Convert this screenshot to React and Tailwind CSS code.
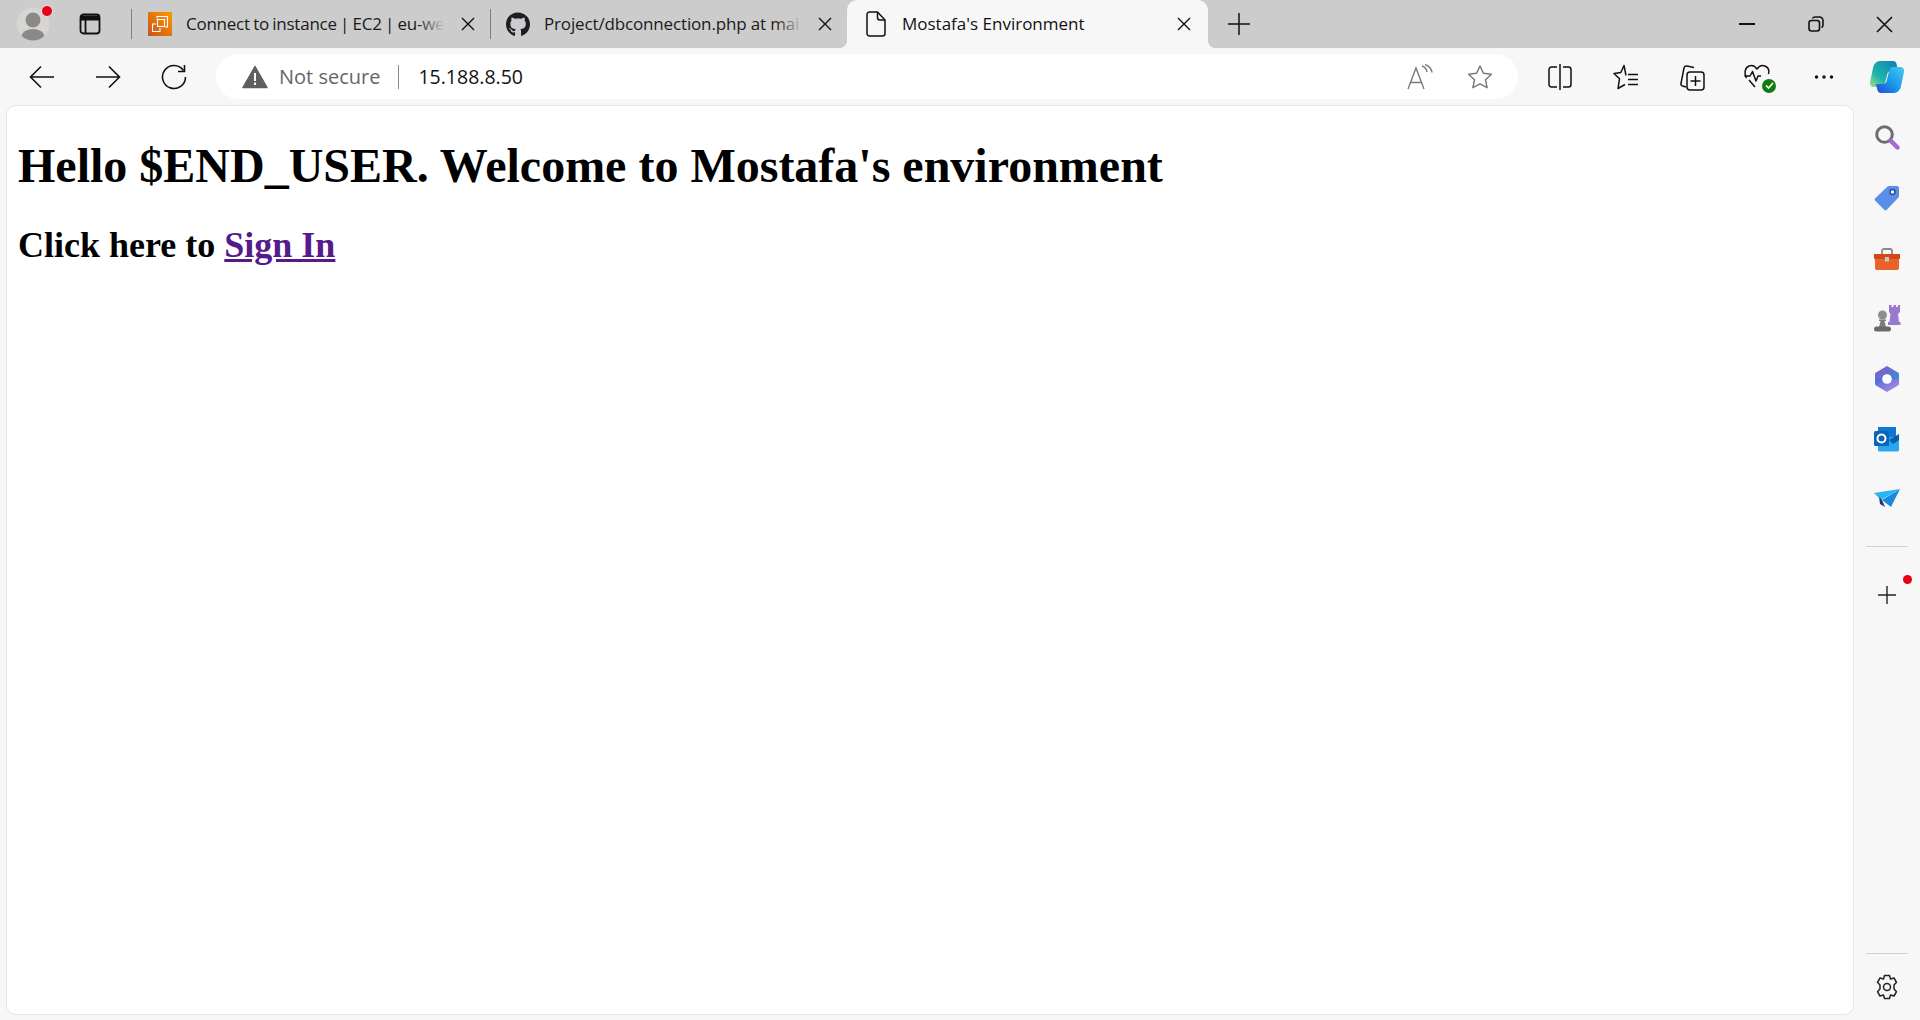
import React from 'react';
import { FaGithub } from 'react-icons/fa';

const CloseIcon = ({ size = 14 }) => (
  <svg width={size} height={size} viewBox="0 0 14 14" fill="none" stroke="#111" strokeWidth="1.4">
    <path d="M1 1l12 12M13 1L1 13" />
  </svg>
);

const Avatar = () => (
  <div className="relative w-[40px] h-[40px] flex items-center justify-center">
    <svg width="34" height="34" viewBox="0 0 34 34">
      <defs>
        <clipPath id="avatarClip"><circle cx="17" cy="17" r="16.5" /></clipPath>
      </defs>
      <circle cx="17" cy="17" r="16.5" fill="#d8d6d2" />
      <g clipPath="url(#avatarClip)" fill="#8b8987">
        <circle cx="17" cy="13" r="7.5" />
        <ellipse cx="17" cy="30" rx="11.5" ry="8" />
      </g>
    </svg>
    <span className="absolute top-[1px] right-[0px] w-[12px] h-[12px] rounded-full bg-[#e60012] border border-[#e6e6e6]" />
  </div>
);

const TabActionsIcon = () => (
  <svg width="22" height="22" viewBox="0 0 22 22" fill="none" stroke="#111" strokeWidth="1.8">
    <rect x="1.5" y="1.5" width="19" height="19" rx="3" />
    <path d="M1.5 5h19" strokeWidth="5" />
    <path d="M6.5 6v14" />
  </svg>
);

const Ec2Favicon = () => (
  <svg width="24" height="24" viewBox="0 0 24 24">
    <defs>
      <linearGradient id="ec2Grad" x1="0" y1="1" x2="1" y2="0">
        <stop offset="0" stopColor="#c8511b" />
        <stop offset="1" stopColor="#ff9900" />
      </linearGradient>
    </defs>
    <rect width="24" height="24" fill="url(#ec2Grad)" />
    <g fill="none" stroke="#fff" strokeWidth="1.1">
      <path d="M9 6.5V4.5h10.5V15H17" />
      <rect x="9.5" y="7.5" width="7" height="7" />
      <path d="M8 12H4.5v7.5H12V16" />
    </g>
  </svg>
);

const FileIcon = () => (
  <svg width="20" height="26" viewBox="0 0 20 26" fill="none" stroke="#111" strokeWidth="1.5" strokeLinejoin="round">
    <path d="M3.5 1h8L19 9v13.5a2.5 2.5 0 0 1-2.5 2.5h-13A2.5 2.5 0 0 1 1 22.5v-19A2.5 2.5 0 0 1 3.5 1z" />
    <path d="M11.5 1v5.5A2.5 2.5 0 0 0 14 9h5" />
  </svg>
);

const InactiveTab = ({ icon, title, className, closeWidth, titleClass }) => (
  <div className={`flex items-center h-full shrink-0 ${className}`}>
    <div className="w-[24px] h-[24px] flex items-center justify-center shrink-0">{icon}</div>
    <div className={`relative ml-[14px] flex-1 overflow-hidden whitespace-nowrap text-[17px] text-[#1a1a1a] ${titleClass}`}>
      {title}
      <span className="absolute top-0 bottom-0 right-0 w-[28px] bg-gradient-to-r from-transparent to-[#cccccc]" />
    </div>
    <div className={`flex items-center justify-center shrink-0 ${closeWidth}`}>
      <CloseIcon />
    </div>
  </div>
);

const TabBar = () => (
  <div className="h-[48px] bg-[#cccccc] flex items-center shrink-0 pl-[13px] font-['Open_Sans','Noto_Sans',sans-serif]">
    <Avatar />
    <div className="w-[40px] ml-[17px] flex justify-center">
      <TabActionsIcon />
    </div>
    <div className="w-[1px] h-[30px] bg-[#808080] ml-[21px]" />
    <InactiveTab icon={<Ec2Favicon />} title="Connect to instance | EC2 | eu-we" className="w-[358px] pl-[16px]" closeWidth="w-[45px]" titleClass="tracking-[-0.25px] [word-spacing:-0.8px]" />
    <div className="w-[1px] h-[30px] bg-[#808080]" />
    <InactiveTab icon={<FaGithub size={25} color="#1b1f23" />} title="Project/dbconnection.php at mai" className="w-[356px] pl-[15px]" closeWidth="w-[44px]" titleClass="tracking-[-0.15px]" />
    <div className="relative w-[361px] h-full bg-[#f7f7f7] rounded-t-[10px] flex items-center pl-[19px] shrink-0">
      <FileIcon />
      <span className="ml-[16px] text-[17px] text-[#111] flex-1 whitespace-nowrap">Mostafa's Environment</span>
      <div className="w-[48px] flex justify-center"><CloseIcon /></div>
      <span className="absolute bottom-0 -left-[8px] w-[8px] h-[8px] bg-[radial-gradient(circle_at_0_0,transparent_8px,#f7f7f7_8px)]" />
      <span className="absolute bottom-0 -right-[8px] w-[8px] h-[8px] bg-[radial-gradient(circle_at_100%_0,transparent_8px,#f7f7f7_8px)]" />
    </div>
    <div className="w-[62px] flex justify-center">
      <svg width="22" height="22" viewBox="0 0 22 22" stroke="#111" strokeWidth="1.5"><path d="M11 0v22M0 11h22" /></svg>
    </div>
    <div className="ml-auto flex items-center h-full">
      <div className="w-[70px] flex justify-center">
        <svg width="16" height="2" viewBox="0 0 16 2"><rect width="16" height="2" fill="#111" /></svg>
      </div>
      <div className="w-[68px] flex justify-center">
        <svg width="16" height="16" viewBox="0 0 16 16" fill="none" stroke="#111" strokeWidth="1.6">
          <rect x="1" y="4.5" width="10.5" height="10.5" rx="2.5" />
          <path d="M4.5 2.5c.5-1 1.3-1.5 2.5-1.5h4.5A3.5 3.5 0 0 1 15 4.5v4.5c0 1.2-.5 2-1.500 2.500" />
        </svg>
      </div>
      <div className="w-[70px] pr-[2px] flex justify-center">
        <svg width="17" height="17" viewBox="0 0 17 17" stroke="#111" strokeWidth="1.6"><path d="M1 1l15 15M16 1L1 16" /></svg>
      </div>
    </div>
  </div>
);

const ToolButton = ({ children, width = 'w-[66px]' }) => (
  <div className={`${width} h-[40px] flex items-center justify-center shrink-0`}>{children}</div>
);

const Toolbar = () => (
  <div className="h-[57px] bg-[#f7f7f7] flex items-center shrink-0 pl-[9px] font-['Open_Sans','Noto_Sans',sans-serif]">
    <ToolButton>
      <svg width="26" height="24" viewBox="0 0 26 24" fill="none" stroke="#111" strokeWidth="1.6"><path d="M25 12H2M12 1.5L1.5 12 12 22.5" /></svg>
    </ToolButton>
    <ToolButton>
      <svg width="26" height="24" viewBox="0 0 26 24" fill="none" stroke="#111" strokeWidth="1.6"><path d="M1 12h23M14 1.5L24.5 12 14 22.5" /></svg>
    </ToolButton>
    <ToolButton>
      <svg width="26" height="26" viewBox="0 0 26 26" fill="none" stroke="#111" strokeWidth="1.6"><path d="M22.5 6.5A11.5 11.5 0 1 0 24.5 13" /><path d="M23.5 1v6.5H17" /></svg>
    </ToolButton>
    <div className="ml-[9px] w-[1302px] h-[45px] bg-white rounded-[23px] flex items-center pl-[26px] pr-[25px] shrink-0">
      <svg width="26" height="24" viewBox="0 0 26 24">
        <path d="M13 1.5L25 22.5H1z" fill="#5f5f5f" stroke="#5f5f5f" strokeWidth="1.5" strokeLinejoin="round" />
        <rect x="12" y="8" width="2" height="8" fill="#fff" />
        <rect x="12" y="17.5" width="2" height="2.5" fill="#fff" />
      </svg>
      <span className="ml-[11px] text-[20px] text-[#666666] whitespace-nowrap">Not secure</span>
      <span className="ml-[18px] w-[1px] h-[24px] bg-[#8a8a8a]" />
      <span className="ml-[19px] text-[19.5px] text-[#111] whitespace-nowrap">15.188.8.50</span>
      <div className="ml-auto flex items-center gap-[32px]">
        <svg width="28" height="26" viewBox="0 0 28 26" fill="none" stroke="#7a7a7a" strokeWidth="1.4">
          <path d="M1 25L9 4l8 21M3.5 18.5h11" />
          <path d="M15 2c3 1 4.5 3 5 6M18 0.5c4 1.5 6.5 4 7 8" />
        </svg>
        <svg width="26" height="26" viewBox="0 0 26 26" fill="none" stroke="#7a7a7a" strokeWidth="1.5" strokeLinejoin="round">
          <path d="M13 2l3.4 7.3 8 1-5.9 5.5 1.6 7.9L13 19.8l-7.1 3.9 1.6-7.9L1.6 10.3l8-1z" />
        </svg>
      </div>
    </div>
    <div className="ml-[9px] flex items-center">
      <ToolButton>
        <svg width="24" height="26" viewBox="0 0 24 26" fill="none" stroke="#111" strokeWidth="1.5">
          <path d="M9 3H3.5A2.5 2.5 0 0 0 1 5.5v15A2.5 2.5 0 0 0 3.5 23H9M15 3h5.5A2.5 2.5 0 0 1 23 5.5v15a2.5 2.5 0 0 1-2.5 2.5H15M12 0v26" />
        </svg>
      </ToolButton>
      <ToolButton>
        <svg width="26" height="26" viewBox="0 0 26 26" fill="none" stroke="#111" strokeWidth="1.5" strokeLinejoin="round">
          <path d="M13 11.5L11 1.5 7.8 8.5 1 9.5l5.5 5.3L5 24.500l7-4" />
          <path d="M15 10.5h10M15 15.5h10M15 20.5h10" />
        </svg>
      </ToolButton>
      <ToolButton>
        <svg width="26" height="28" viewBox="0 0 26 28" fill="none" stroke="#111" strokeWidth="1.5">
          <path d="M7 24L3.5 23c-1.2-.4-1.8-1.5-1.5-2.7L5 5c.3-1.5 1.5-2.3 3-2l7 1.5" />
          <rect x="8" y="9" width="17" height="18" rx="3" />
          <path d="M16.5 13v10M11.5 18h10" />
        </svg>
      </ToolButton>
      <ToolButton>
        <div className="relative w-[30px] h-[28px]">
          <svg width="30" height="28" viewBox="0 0 30 28" fill="none" stroke="#111" strokeWidth="1.5" strokeLinejoin="round">
            <path d="M3.5 15C1 11 1.5 5 6 3c3-1.3 6 0 8 3 2-3 5-4.3 8-3 3 1.3 4.5 4.5 3.5 8" />
            <path d="M1.5 13H7l2.5-4.5L13 18l2-5h3" />
            <path d="M6 17l6 7" />
          </svg>
          <span className="absolute right-[-3px] bottom-[-2px] w-[14px] h-[14px] rounded-full bg-[#107c10] flex items-center justify-center">
            <svg width="9" height="9" viewBox="0 0 9 9" fill="none" stroke="#fff" strokeWidth="1.7"><path d="M1 4.5l2.5 2.5L8 2" /></svg>
          </span>
        </div>
      </ToolButton>
      <ToolButton>
        <svg width="20" height="4" viewBox="0 0 20 4" fill="#111"><circle cx="2.5" cy="2" r="1.7" /><circle cx="10" cy="2" r="1.7" /><circle cx="17.5" cy="2" r="1.7" /></svg>
      </ToolButton>
      <ToolButton width="w-[60px]">
        <svg width="36" height="36" viewBox="0 0 36 36">
          <defs>
            <linearGradient id="copA" x1="0" y1="1" x2="1" y2="0">
              <stop offset="0" stopColor="#a8e08a" />
              <stop offset="0.35" stopColor="#1fb5a8" />
              <stop offset="1" stopColor="#0f7fb8" />
            </linearGradient>
            <linearGradient id="copB" x1="0" y1="1" x2="1" y2="0">
              <stop offset="0" stopColor="#2448d8" />
              <stop offset="0.5" stopColor="#1a9be8" />
              <stop offset="1" stopColor="#4ac8f4" />
            </linearGradient>
          </defs>
          <path d="M11 2h13c2 0 3 1 3.6 3L29 12H22c-2 0-3 1-3.5 2.5L16 24c-.8 3-2 4-4.5 4H5c-3 0-4.500-2-4-5L4 9c.8-4 3.500-7 7-7z" fill="url(#copA)" />
          <path d="M25 34H12c-2 0-3-1-3.6-3L7 25h7c2 0 3-1 3.5-2.500L20 12c.8-3 2-4 4.500-4H31c3 0 4.500 2 4 5l-3 14c-.8 4-3.500 7-7 7z" fill="url(#copB)" />
        </svg>
      </ToolButton>
    </div>
  </div>
);

const SideIcon = ({ children }) => (
  <div className="h-[60px] w-full flex items-center justify-center shrink-0">{children}</div>
);

const Sidebar = () => (
  <div className="w-[66px] h-full flex flex-col items-center pt-[3px] shrink-0">
    <SideIcon>
      <svg width="26" height="26" viewBox="0 0 26 26" fill="none" className="-mt-[2px]">
        <circle cx="10.5" cy="10.5" r="7.8" stroke="#6e6e6e" strokeWidth="3" />
        <path d="M17 17l6.5 6.5" stroke="#a668d8" strokeWidth="4.5" strokeLinecap="round" />
      </svg>
    </SideIcon>
    <SideIcon>
      <svg width="26" height="26" viewBox="0 0 26 26">
        <path d="M15 1h8a2 2 0 0 1 2 2v8a3 3 0 0 1-1 2L13 24.5a2 2 0 0 1-3 0L1.5 16a2 2 0 0 1 0-3L13 2a3 3 0 0 1 2-1z" fill="#5a8ee8" />
        <circle cx="18.5" cy="7" r="2.5" fill="#fff" stroke="#2c4a9a" strokeWidth="1.5" />
      </svg>
    </SideIcon>
    <SideIcon>
      <svg width="28" height="22" viewBox="0 0 28 22" className="mt-[2px]">
        <path d="M9 6V3a2 2 0 0 1 2-2h6a2 2 0 0 1 2 2v3" fill="none" stroke="#8a8a8a" strokeWidth="1.8" />
        <path d="M1 6h26v5H1z" fill="#d04a18" />
        <path d="M2 11h24v9a2 2 0 0 1-2 2H4a2 2 0 0 1-2-2z" fill="#e8622a" />
        <rect x="12" y="9" width="4" height="4.5" fill="#c8c8c8" />
      </svg>
    </SideIcon>
    <SideIcon>
      <svg width="28" height="28" viewBox="0 0 28 28">
        <path d="M16 1h2.5v2h2V1h2.5v2h2V1h2v7l-2 2 1 8h1.5v3H15v-3h1.5l1-8-1.5-2z" fill="#9a78d0" />
        <circle cx="9.5" cy="11" r="4.5" fill="#8e8e8e" />
        <path d="M6 15.5h7v1.5h-1.5l1.5 6H6l1.5-6H6z" fill="#7c7c7c" />
        <rect x="1" y="22.5" width="17" height="5" rx="2.5" fill="#6a6a6a" />
      </svg>
    </SideIcon>
    <SideIcon>
      <svg width="26" height="28" viewBox="0 0 26 28" className="mt-[2px]">
        <defs>
          <linearGradient id="m365Top" x1="0" y1="0" x2="1" y2="1">
            <stop offset="0" stopColor="#9c4fc4" />
            <stop offset="1" stopColor="#2f8fd8" />
          </linearGradient>
          <linearGradient id="m365Bottom" x1="0" y1="0" x2="1" y2="1">
            <stop offset="0" stopColor="#3f6fd8" />
            <stop offset="1" stopColor="#c78be8" />
          </linearGradient>
        </defs>
        <path d="M13 1l11 6.5a2 2 0 0 1 1 2V14H1V9.5a2 2 0 0 1 1-2z" fill="url(#m365Top)" />
        <path d="M1 14h24v4.5a2 2 0 0 1-1 2L13 27 2 20.5a2 2 0 0 1-1-2z" fill="url(#m365Bottom)" />
        <circle cx="13" cy="14" r="4.8" fill="#fff" />
      </svg>
    </SideIcon>
    <SideIcon>
      <svg width="26" height="26" viewBox="0 0 26 26" className="mt-[1px]">
        <rect x="4" y="1" width="18" height="12" fill="#0f78d4" />
        <path d="M4 11h21v13a1.5 1.5 0 0 1-1.5 1.5h-18A1.5 1.5 0 0 1 4 24z" fill="#28a8ea" />
        <path d="M15 14l10-6v6l-6 4z" fill="#0a5ca8" />
        <rect x="0" y="5" width="15" height="15" rx="1.5" fill="#0a64b8" />
        <circle cx="7.5" cy="12.5" r="4" fill="none" stroke="#fff" strokeWidth="2" />
      </svg>
    </SideIcon>
    <SideIcon>
      <svg width="26" height="20" viewBox="0 0 26 20" className="mt-[2px]">
        <path d="M0 4L26 0 7 11z" fill="#29b6f0" />
        <path d="M26 0L17 18 8 11z" fill="#1a8ad8" />
        <path d="M5 8l3 3 3 7-5-3z" fill="#1c3a78" />
      </svg>
    </SideIcon>
    <div className="w-[42px] h-[1px] bg-[#d1d1d1] mt-[18px]" />
    <div className="relative w-full h-[60px] mt-[18px] flex items-center justify-center">
      <svg width="18" height="18" viewBox="0 0 18 18" stroke="#222" strokeWidth="1.4"><path d="M9 0v18M0 9h18" /></svg>
      <span className="absolute top-[10px] right-[8px] w-[9px] h-[9px] rounded-full bg-[#e60012]" />
    </div>
    <div className="mt-auto w-[42px] h-[1px] bg-[#d1d1d1]" />
    <div className="h-[65px] flex items-center justify-center mb-[1px] shrink-0">
      <svg width="24" height="26" viewBox="0 0 24 26" fill="none" stroke="#222" strokeWidth="1.5" strokeLinejoin="round">
        <path d="M9.5 1.5h5l1 3.5 3.5-1 2.5 4.3-2.5 2.7v4l2.5 2.7-2.5 4.3-3.5-1-1 3.5h-5l-1-3.5-3.5 1-2.5-4.3 2.5-2.7v-4L2.5 8.3 5 4l3.5 1z" />
        <circle cx="12" cy="13" r="3.5" />
      </svg>
    </div>
  </div>
);

const App = () => (
  <div className="w-full h-screen bg-[#f7f7f7] flex flex-col overflow-hidden">
    <TabBar />
    <Toolbar />
    <div className="flex-1 flex min-h-0 pl-[6px]">
      <div className="w-[1848px] mb-[5px] bg-white border border-[#e6e6e6] rounded-[10px] pl-[11px] font-['Liberation_Serif',serif] font-bold text-black shrink-0">
        <h1 className="text-[48px] leading-[55px] mt-[32px]">Hello $END_USER. Welcome to Mostafa's environment</h1>
        <h2 className="text-[36px] leading-[41px] mt-[32px]">
          Click here to <a href="#" className="text-[#551a8b] underline">Sign In</a>
        </h2>
      </div>
      <Sidebar />
    </div>
  </div>
);

export default App;
